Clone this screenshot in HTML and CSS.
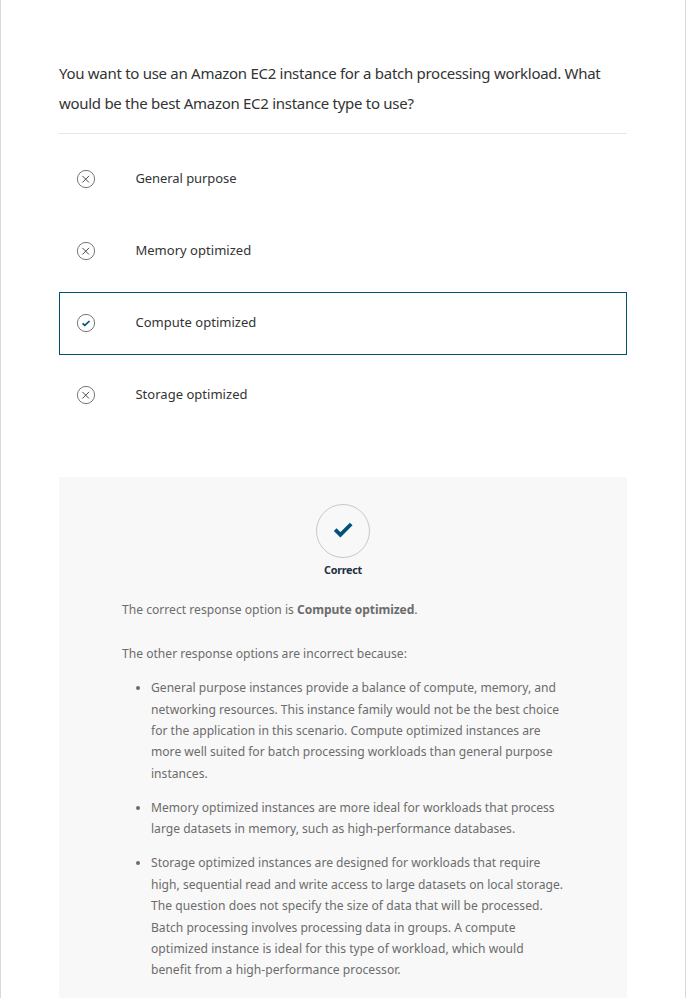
FILE: index.html
```
<!DOCTYPE html>
<html lang="en">
<head>
<meta charset="utf-8">
<title>Knowledge check</title>
<link rel="stylesheet" href="styles.css">
</head>
<body>
<main class="quiz">
  <h1 class="question">You want to use an Amazon EC2 instance for a batch processing workload. What<br>would be the best Amazon EC2 instance type to use?</h1>
  <ul class="options">
    <li class="option">
      <svg class="mark" viewBox="0 0 20 20"><circle cx="10" cy="10" r="8.6"/><path class="cross" d="M6.4 6.9l6.6 6.6M13 6.9l-6.6 6.6"/></svg>
      <span class="tight">General purpose</span>
    </li>
    <li class="option">
      <svg class="mark" viewBox="0 0 20 20"><circle cx="10" cy="10" r="8.6"/><path class="cross" d="M6.4 6.9l6.6 6.6M13 6.9l-6.6 6.6"/></svg>
      <span>Memory optimized</span>
    </li>
    <li class="option selected">
      <svg class="mark" viewBox="0 0 20 20"><circle cx="10" cy="10" r="8.6"/><path class="tick" d="M6.6 10.4l2.2 2L13.5 8"/></svg>
      <span>Compute optimized</span>
    </li>
    <li class="option">
      <svg class="mark" viewBox="0 0 20 20"><circle cx="10" cy="10" r="8.6"/><path class="cross" d="M6.4 6.9l6.6 6.6M13 6.9l-6.6 6.6"/></svg>
      <span>Storage optimized</span>
    </li>
  </ul>
  <section class="feedback">
    <div class="badge">
      <svg viewBox="0 0 52 52"><path d="M18.2 24.6l5.2 5.2L34.2 19"/></svg>
    </div>
    <div class="verdict">Correct</div>
    <p class="answer"><span class="wide">The correct response option is</span> <strong>Compute optimized</strong>.</p>
    <p class="lead">The other response options are incorrect because:</p>
    <ul class="reasons">
      <li>General purpose instances provide a balance of compute, memory, and<br>networking resources. This instance family would not be the best choice<br>for the application in this scenario. Compute optimized instances are<br>more well suited for batch processing workloads than general purpose<br>instances.</li>
      <li>Memory optimized instances are more ideal for workloads that process<br>large datasets in memory, such as high-performance databases.</li>
      <li>Storage optimized instances are designed for workloads that require<br>high, sequential read and write access to large datasets on local storage.<br><span class="loose">The question does not specify the size of data that will be processed.</span><br>Batch processing involves processing data in groups. A compute<br><span class="loose">optimized instance is ideal for this type of workload, which would</span><br><span class="loose">benefit from a high-performance processor.</span></li>
    </ul>
  </section>
</main>
</body>
</html>
```
FILE: styles.css
```
* { box-sizing: border-box; }
body {
  margin: 0;
  height: 998px;
  overflow: hidden;
  background: #fff;
  color: #232f3e;
  font-family: "Noto Sans", sans-serif;
}
.quiz {
  height: 998px;
  overflow: hidden;
  padding: 58px 58px 0;
  border: solid #d9d9d9;
  border-width: 0 1px;
}
.question {
  margin: 0;
  height: 76px;
  border-bottom: 1px solid #e6e6e6;
  color: #333;
  font-size: 15px;
  font-weight: 400;
  line-height: 30px;
  letter-spacing: -.288px;
  white-space: nowrap;
}
.options {
  display: flex;
  flex-direction: column;
  gap: 9px;
  margin: 14px 0 0;
  padding: 0;
  list-style: none;
}
.option {
  display: flex;
  align-items: center;
  height: 63px;
  padding: 0 0 2px 16px;
  border: 1px solid transparent;
  color: #333;
  font-size: 13px;
  line-height: 20px;
  letter-spacing: .028px;
}
.option span { padding-bottom: 2px; }
.option .tight { letter-spacing: -.07px; }
.selected { border-color: #005276; }
.mark {
  width: 20px;
  height: 20px;
  margin-right: 39.4px;
  fill: none;
}
.mark circle { stroke: #777; stroke-width: 1; }
.cross { stroke: #414750; stroke-width: 1; }
.tick { stroke: #005276; stroke-width: 1.7; }
.feedback {
  height: 560px;
  margin-top: 50px;
  padding: 27px 63px 0;
  background: #f8f8f8;
  color: #6c6c6c;
  font-size: 12.1px;
  line-height: 21.375px;
  letter-spacing: 0;
  white-space: nowrap;
}
.badge {
  width: 54px;
  height: 54px;
  margin: 0 auto;
  border: 1px solid #c8c8c8;
  border-radius: 50%;
}
.badge svg { display: block; width: 52px; height: 52px; fill: none; stroke: #005276; stroke-width: 3.8; }
.verdict {
  height: 24px;
  color: #232f3e;
  font-size: 10.8px;
  font-weight: 700;
  line-height: 24px;
  letter-spacing: -.27px;
  text-align: center;
}
.answer { margin: 17.2px 0 22.5px; }
.answer strong { letter-spacing: -.08px; }
.answer .wide { letter-spacing: .01px; }
.lead { margin: 0 0 12.8px; }
.reasons { margin: 0; padding-left: 29px; }
.reasons li { margin-bottom: 12.8px; }
.reasons .loose { letter-spacing: .045px; }
```
